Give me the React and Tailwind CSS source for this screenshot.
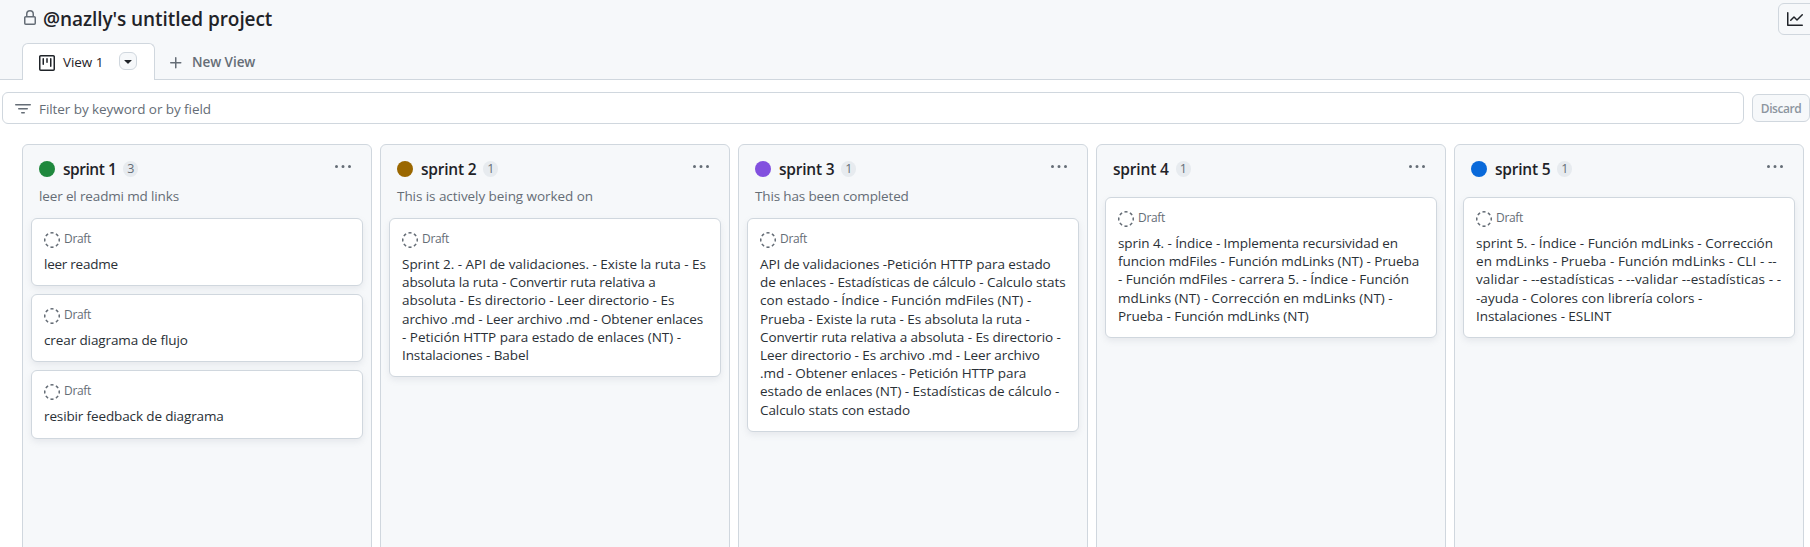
import React from "react";

const ctx = document.createElement("canvas").getContext("2d");

/* One line of text whose tracking is computed so that it spans `w` pixels. */
function Fit({ t, w, size = 13.5, weight = 400, className = "" }) {
  ctx.font = `${weight} ${size}px "Open Sans"`;
  const spacing = (w + 1 - ctx.measureText(t).width) / t.length;
  return (
    <span className={`whitespace-pre ${className}`} style={{ fontSize: size, fontWeight: weight, letterSpacing: `${spacing.toFixed(3)}px` }}>
      {t}
    </span>
  );
}

const Icon = ({ d, className = "" }) => (
  <svg viewBox="0 0 16 16" width="16" height="16" fill="currentColor" className={`shrink-0 ${className}`}>
    <path d={d} />
  </svg>
);

const LOCK = "M4 4a4 4 0 0 1 8 0v2h.25c.966 0 1.75.784 1.75 1.75v5.5A1.75 1.75 0 0 1 12.25 15h-8.5A1.75 1.75 0 0 1 2 13.25v-5.5C2 6.784 2.784 6 3.75 6H4Zm8.25 3.5h-8.5a.25.25 0 0 0-.25.25v5.5c0 .138.112.25.25.25h8.5a.25.25 0 0 0 .25-.25v-5.5a.25.25 0 0 0-.25-.25ZM10.5 6V4a2.5 2.5 0 1 0-5 0v2Z";
const PROJECT = "M1.75 0h12.5C15.216 0 16 .784 16 1.75v12.5A1.75 1.75 0 0 1 14.25 16H1.75A1.75 1.75 0 0 1 0 14.25V1.75C0 .784.784 0 1.75 0ZM1.5 1.75v12.5c0 .138.112.25.25.25h12.5a.25.25 0 0 0 .25-.25V1.75a.25.25 0 0 0-.25-.25H1.75a.25.25 0 0 0-.25.25ZM11.75 3a.75.75 0 0 1 .75.75v7.5a.75.75 0 0 1-1.5 0v-7.5a.75.75 0 0 1 .75-.75Zm-8.25.75a.75.75 0 0 1 1.5 0v5.5a.75.75 0 0 1-1.5 0ZM8 3a.75.75 0 0 1 .75.75v3.5a.75.75 0 0 1-1.5 0v-3.5A.75.75 0 0 1 8 3Z";
const TRIANGLE = "m4.427 7.427 3.396 3.396a.25.25 0 0 0 .354 0l3.396-3.396A.25.25 0 0 0 11.396 7H4.604a.25.25 0 0 0-.177.427Z";
const PLUS = "M7.75 2a.75.75 0 0 1 .75.75V7h4.25a.75.75 0 0 1 0 1.5H8.5v4.25a.75.75 0 0 1-1.5 0V8.5H2.75a.75.75 0 0 1 0-1.5H7V2.75A.75.75 0 0 1 7.75 2Z";
const GRAPH = "M1.5 1.75V13.5h13.75a.75.75 0 0 1 0 1.5H.75a.75.75 0 0 1-.75-.75V1.75a.75.75 0 0 1 1.5 0Zm14.28 2.53-5.25 5.25a.75.75 0 0 1-1.06 0L7 7.06 4.28 9.78a.751.751 0 0 1-1.042-.018.751.751 0 0 1-.018-1.042l3.25-3.25a.75.75 0 0 1 1.06 0L10 7.94l4.72-4.72a.751.751 0 0 1 1.042.018.751.751 0 0 1 .018 1.042Z";
const FILTER = "M.75 3h14.5a.75.75 0 0 1 0 1.5H.75a.75.75 0 0 1 0-1.5ZM3 7.75A.75.75 0 0 1 3.75 7h8.5a.75.75 0 0 1 0 1.5h-8.5A.75.75 0 0 1 3 7.75Zm3 4a.75.75 0 0 1 .75-.75h2.5a.75.75 0 0 1 0 1.5h-2.5a.75.75 0 0 1-.75-.75Z";
const KEBAB = "M8 9a1.5 1.5 0 1 0 0-3 1.5 1.5 0 0 0 0 3ZM1.5 9a1.5 1.5 0 1 0 0-3 1.5 1.5 0 0 0 0 3Zm13 0a1.5 1.5 0 1 0 0-3 1.5 1.5 0 0 0 0 3Z";

const DraftIcon = () => (
  <svg viewBox="0 0 16 16" width="16" height="16" className="shrink-0" fill="none" stroke="currentColor" strokeWidth="1.5">
    <circle cx="8" cy="8" r="7.25" pathLength="80" strokeDasharray="5.5 4.5" strokeDashoffset="2.75" />
  </svg>
);

const COLUMNS = [
  {
    name: "sprint 1", nameW: 52.3, count: 3, dot: "bg-[#1f883d]", desc: ["leer el readmi md links", 139],
    cards: [
      [["leer readme", 72.7]],
      [["crear diagrama de flujo", 142.7]],
      [["resibir feedback de diagrama", 178.7]],
    ],
  },
  {
    name: "sprint 2", nameW: 54.3, count: 1, dot: "bg-[#9a6700]", desc: ["This is actively being worked on", 195],
    cards: [[
      ["Sprint 2. - API de validaciones. - Existe la ruta - Es", 303],
      ["absoluta la ruta - Convertir ruta relativa a", 252.7],
      ["absoluta - Es directorio - Leer directorio - Es", 271.3],
      ["archivo .md - Leer archivo .md - Obtener enlaces", 300],
      ["- Petición HTTP para estado de enlaces (NT) -", 278],
      ["Instalaciones - Babel", 125.7],
    ]],
  },
  {
    name: "sprint 3", nameW: 54.3, count: 1, dot: "bg-[#8250df]", desc: ["This has been completed", 152.7],
    cards: [[
      ["API de validaciones -Petición HTTP para estado", 289.7],
      ["de enlaces - Estadísticas de cálculo - Calculo stats", 304.7],
      ["con estado - Índice - Función mdFiles (NT) -", 270.3],
      ["Prueba - Existe la ruta - Es absoluta la ruta -", 268.7],
      ["Convertir ruta relativa a absoluta - Es directorio -", 299.7],
      ["Leer directorio - Es archivo .md - Leer archivo", 278.7],
      [".md - Obtener enlaces - Petición HTTP para", 265.3],
      ["estado de enlaces (NT) - Estadísticas de cálculo -", 298.3],
      ["Calculo stats con estado", 149],
    ]],
  },
  {
    name: "sprint 4", nameW: 54.7, count: 1,
    cards: [[
      ["sprin 4. - Índice - Implementa recursividad en", 279],
      ["funcion mdFiles - Función mdLinks (NT) - Prueba", 300.3],
      ["- Función mdFiles - carrera 5. - Índice - Función", 290],
      ["mdLinks (NT) - Corrección en mdLinks (NT) -", 273.7],
      ["Prueba - Función mdLinks (NT)", 189.7],
    ]],
  },
  {
    name: "sprint 5", nameW: 54.3, count: 1, dot: "bg-[#0969da]",
    cards: [[
      ["sprint 5. - Índice - Función mdLinks - Corrección", 296],
      ["en mdLinks - Prueba - Función mdLinks - CLI - --", 299.7],
      ["validar - --estadísticas - --validar --estadísticas - -", 304.3],
      ["-ayuda - Colores con librería colors -", 225.3],
      ["Instalaciones - ESLINT", 134.3],
    ]],
  },
];

function Card({ lines }) {
  return (
    <article className="rounded-md border border-[#d0d7de] bg-white px-3 pt-[13px] pb-3 shadow-[0_3px_6px_rgba(140,149,159,0.15)]">
      <div className="flex h-4 items-center gap-1 text-[#656d76]">
        <DraftIcon />
        <Fit t="Draft" w={26} size={12} className="-mt-0.5" />
      </div>
      <div className="mt-[7px] flex flex-col leading-[18.2px] text-[#2a3036]">
        {lines.map(([t, w]) => <Fit key={t} t={t} w={w} />)}
      </div>
    </article>
  );
}

function Column({ name, nameW, count, dot, desc, cards }) {
  return (
    <section className="flex h-[420px] w-[350px] shrink-0 flex-col rounded-md border border-[#d0d7de] bg-[#f6f8fa] px-2">
      <header className="mt-4 flex h-4 items-center px-2">
        {dot && <span className={`mr-2 size-4 rounded-full ${dot}`} />}
        <Fit t={name} w={nameW} size={15.5} weight={600} className="leading-4" />
        <span className="ml-[7px] flex h-4 min-w-[15px] items-center justify-center rounded-full bg-[#e7ebef] px-1 text-[12.5px] font-medium leading-4 text-[#656d76]">{count}</span>
        <Icon d={KEBAB} className="-mt-1 mr-1 ml-auto text-[#656d76]" />
      </header>
      {desc ? (
        <p className="mt-2 flex h-[33px] px-2 leading-[23px] text-[#656d76]"><Fit t={desc[0]} w={desc[1]} /></p>
      ) : (
        <div className="h-5" />
      )}
      <div className="flex flex-col gap-2">
        {cards.map((lines, i) => <Card key={i} lines={lines} />)}
      </div>
    </section>
  );
}

export default function App() {
  return (
    <div className="flex h-[547px] w-full flex-col overflow-hidden bg-white font-['Open_Sans',sans-serif] text-[#1f2328]">
      <div className="flex h-20 shrink-0 flex-col justify-between bg-[#f6f8fa] shadow-[inset_0_-1px_0_#d0d7de]">
        <div className="flex h-[38px] items-center justify-between pl-[22px]">
          <h1 className="flex items-center gap-[5px]">
            <Icon d={LOCK} className="-mt-0.5 text-[#656d76]" />
            <Fit t="@nazlly's untitled project" w={228.3} size={19} weight={600} />
          </h1>
          <button className="-mr-3 flex h-8 w-11 items-center rounded-md border border-[#d0d7de] bg-[#f6f8fa] pl-2">
            <Icon d={GRAPH} />
          </button>
        </div>
        <nav className="flex h-[37px] pl-[22px]">
          <div className="flex w-[133px] items-center rounded-t-md border border-b-0 border-[#d0d7de] bg-white pt-px pl-4">
            <Icon d={PROJECT} />
            <Fit t="View 1" w={39.3} className="ml-2" />
            <button className="-mt-[3px] ml-4 flex size-[18px] items-center justify-center rounded-md border border-[#d0d7de] bg-[#f6f8fa]">
              <Icon d={TRIANGLE} />
            </button>
          </div>
          <div className="flex items-center pt-0.5 pl-[13px] text-[#656d76]">
            <Icon d={PLUS} />
            <Fit t="New View" w={62.3} weight={600} className="ml-2" />
          </div>
        </nav>
      </div>
      <div className="mt-3 flex h-8 shrink-0 items-center gap-2 pl-0.5">
        <div className="flex h-8 w-[1742px] items-center gap-2 rounded-md border border-[#d0d7de] pt-0.5 pl-3 text-[#656d76]">
          <Icon d={FILTER} />
          <Fit t="Filter by keyword or by field" w={171} />
        </div>
        <button className="flex h-7 w-[58px] items-center justify-center rounded-md border border-[#d0d7de] bg-[#f6f8fa] pt-px text-[#8c959f]">
          <Fit t="Discard" w={39.3} size={12} weight={600} />
        </button>
      </div>
      <main className="mt-5 flex gap-2 pl-[22px]">
        {COLUMNS.map((c) => <Column key={c.name} {...c} />)}
      </main>
    </div>
  );
}
